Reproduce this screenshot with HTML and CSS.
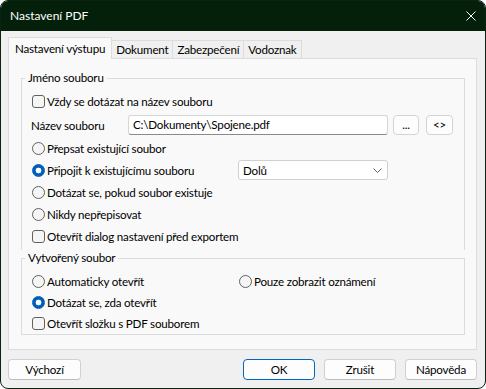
FILE: index.html
```html
<!DOCTYPE html>
<html lang="cs">
<head>
<meta charset="utf-8">
<title>Nastavení PDF</title>
<link rel="stylesheet" href="styles.css">
</head>
<body>
<div class="window">
  <div class="titlebar">
    <span class="title">Nastavení PDF</span>
    <svg class="close" width="10" height="10" viewBox="0 0 10 10"><path d="M0.5 0.5L9.5 9.5M9.5 0.5L0.5 9.5" stroke="#fff" stroke-width="1" fill="none"/></svg>
  </div>
  <div class="main">
    <div class="tabs">
      <div class="tab active">Nastavení výstupu</div>
      <div class="tab">Dokument</div>
      <div class="tab">Zabezpečení</div>
      <div class="tab">Vodoznak</div>
    </div>
    <div class="panel">
      <fieldset class="group group-name">
        <legend>Jméno souboru</legend>
        <div class="row"><span class="cb"></span>Vždy se dotázat na název souboru</div>
        <div class="row file-row">
          <span class="field-label">Název souboru</span>
          <span class="input">C:\Dokumenty\Spojene.pdf</span>
          <span class="mini-btn dots">...</span>
          <span class="mini-btn angles">&lt;&gt;</span>
        </div>
        <div class="row"><span class="rb"></span>Přepsat existující soubor</div>
        <div class="row cols cols-combo">
          <div class="opt"><span class="rb on"></span>Připojit k existujícímu souboru</div>
          <div class="combo"><span>Dolů</span><svg width="9" height="5" viewBox="0 0 9 5"><path d="M0.5 0.5L4.5 4.5L8.5 0.5" stroke="#606060" fill="none" stroke-width="1"/></svg></div>
        </div>
        <div class="row"><span class="rb"></span>Dotázat se, pokud soubor existuje</div>
        <div class="row"><span class="rb"></span>Nikdy nepřepisovat</div>
        <div class="row"><span class="cb"></span>Otevřít dialog nastavení před exportem</div>
      </fieldset>
      <fieldset class="group group-created">
        <legend>Vytvořený soubor</legend>
        <div class="row cols cols-two">
          <div class="opt"><span class="rb"></span>Automaticky otevřít</div>
          <div class="opt"><span class="rb"></span>Pouze zobrazit oznámení</div>
        </div>
        <div class="row"><span class="rb on"></span>Dotázat se, zda otevřít</div>
        <div class="row"><span class="cb"></span>Otevřít složku s PDF souborem</div>
      </fieldset>
    </div>
    <div class="buttons">
      <button class="btn btn-default">Výchozí</button>
      <button class="btn btn-primary">OK</button>
      <button class="btn">Zrušit</button>
      <button class="btn">Nápověda</button>
    </div>
  </div>
</div>
</body>
</html>
```
FILE: styles.css
```css
* { box-sizing: border-box; }
html, body { margin: 0; background: #ffffff; }
body {
  font-family: "Lato", "Noto Sans", sans-serif;
  font-size: 11.6px;
  letter-spacing: -0.2px;
  color: #000;
}
.window {
  width: 486px;
  height: 389px;
  border: 1px solid #0b2410;
  border-radius: 8px;
  background: #f0f0f0;
  overflow: hidden;
  display: flex;
  flex-direction: column;
}
.titlebar {
  flex: none;
  height: 30px;
  background: #04200a;
  color: #fff;
  display: flex;
  align-items: center;
  justify-content: space-between;
  padding: 0 9px 1px 9px;
}
.title { line-height: 16px; font-size: 12px; letter-spacing: 0; }
.close { display: block; }
.main {
  flex: 1;
  padding: 6px 8px 0 7px;
  display: flex;
  flex-direction: column;
}
.tabs {
  display: flex;
  align-items: flex-end;
  height: 21px;
}
.tab {
  height: 18px;
  padding: 0 4px;
  border: 1px solid #dcdcdc;
  border-left: none;
  border-bottom: none;
  background: #f0f0f0;
  line-height: 17px;
  text-align: center;
}
.tab.active {
  height: 22px;
  margin-bottom: -1px;
  padding: 1px 6px 0;
  border-left: 1px solid #dcdcdc;
  background: #f9f9f9;
  line-height: 20px;
  position: relative;
  z-index: 1;
}
.panel {
  height: 292px;
  border: 1px solid #dcdcdc;
  background: #f9f9f9;
  padding: 11px 11px 0 12px;
}
.group {
  margin: 0;
  min-width: 0;
  border: 1px solid #dcdcdc;
  padding: 4px 10px 3px 10px;
}
.group-name { border-bottom: none; }
.group-created { padding-top: 5px; padding-bottom: 0; }
legend {
  padding: 0 3px;
  margin-left: -7px;
  line-height: 16px;
}
.row {
  display: flex;
  align-items: center;
  height: 22px;
  gap: 2px;
  white-space: nowrap;
}
.group-created .row { height: 21px; }
.opt { display: flex; align-items: center; gap: 2px; }
.cols { display: grid; gap: 0; }
.cols-combo { grid-template-columns: 206px 150px; }
.cols-two { grid-template-columns: 207px 200px; }
.cb, .rb {
  flex: none;
  width: 13px;
  height: 13px;
  border: 1px solid #616161;
  background: #f5f5f5;
}
.cb { border-radius: 3px; }
.rb { border-radius: 50%; }
.rb.on {
  border-color: #005fb8;
  background: radial-gradient(circle, #ffffff 0 2.6px, #005fb8 3.2px);
}
.file-row { height: 20px; margin: 3px 0 2px; gap: 0; }
.field-label { width: 96px; margin-left: -1px; }
.input {
  width: 260px;
  height: 20px;
  margin-left: 1px;
  border: 1px solid #d6d6d6;
  border-bottom-color: #8a8a8a;
  border-radius: 3px;
  background: #fff;
  padding: 0 4px;
  line-height: 18px;
}
.mini-btn {
  height: 20px;
  border: 1px solid #d3d3d3;
  border-radius: 4px;
  background: #fdfdfd;
  display: flex;
  align-items: center;
  justify-content: center;
  line-height: 16px;
}
.dots { width: 26px; margin-left: 5px; }
.angles { width: 27px; margin-left: 7px; }
.combo {
  height: 20px;
  border: 1px solid #d0d0d0;
  border-radius: 3px;
  background: #fff;
  display: flex;
  align-items: center;
  justify-content: space-between;
  padding: 0 5px 0 4px;
}
.combo svg { display: block; }
.buttons {
  display: flex;
  gap: 9px;
  margin-top: 9px;
}
.btn {
  width: 72px;
  height: 21px;
  padding: 0;
  font: inherit;
  letter-spacing: inherit;
  color: #000;
  border: 1px solid #d0d0d0;
  border-bottom-color: #bdbdbd;
  border-radius: 4px;
  background: #fdfdfd;
  line-height: 18px;
}
.btn-default { width: 73px; margin-right: auto; }
.btn-primary { border-color: #0067c0; }
```
